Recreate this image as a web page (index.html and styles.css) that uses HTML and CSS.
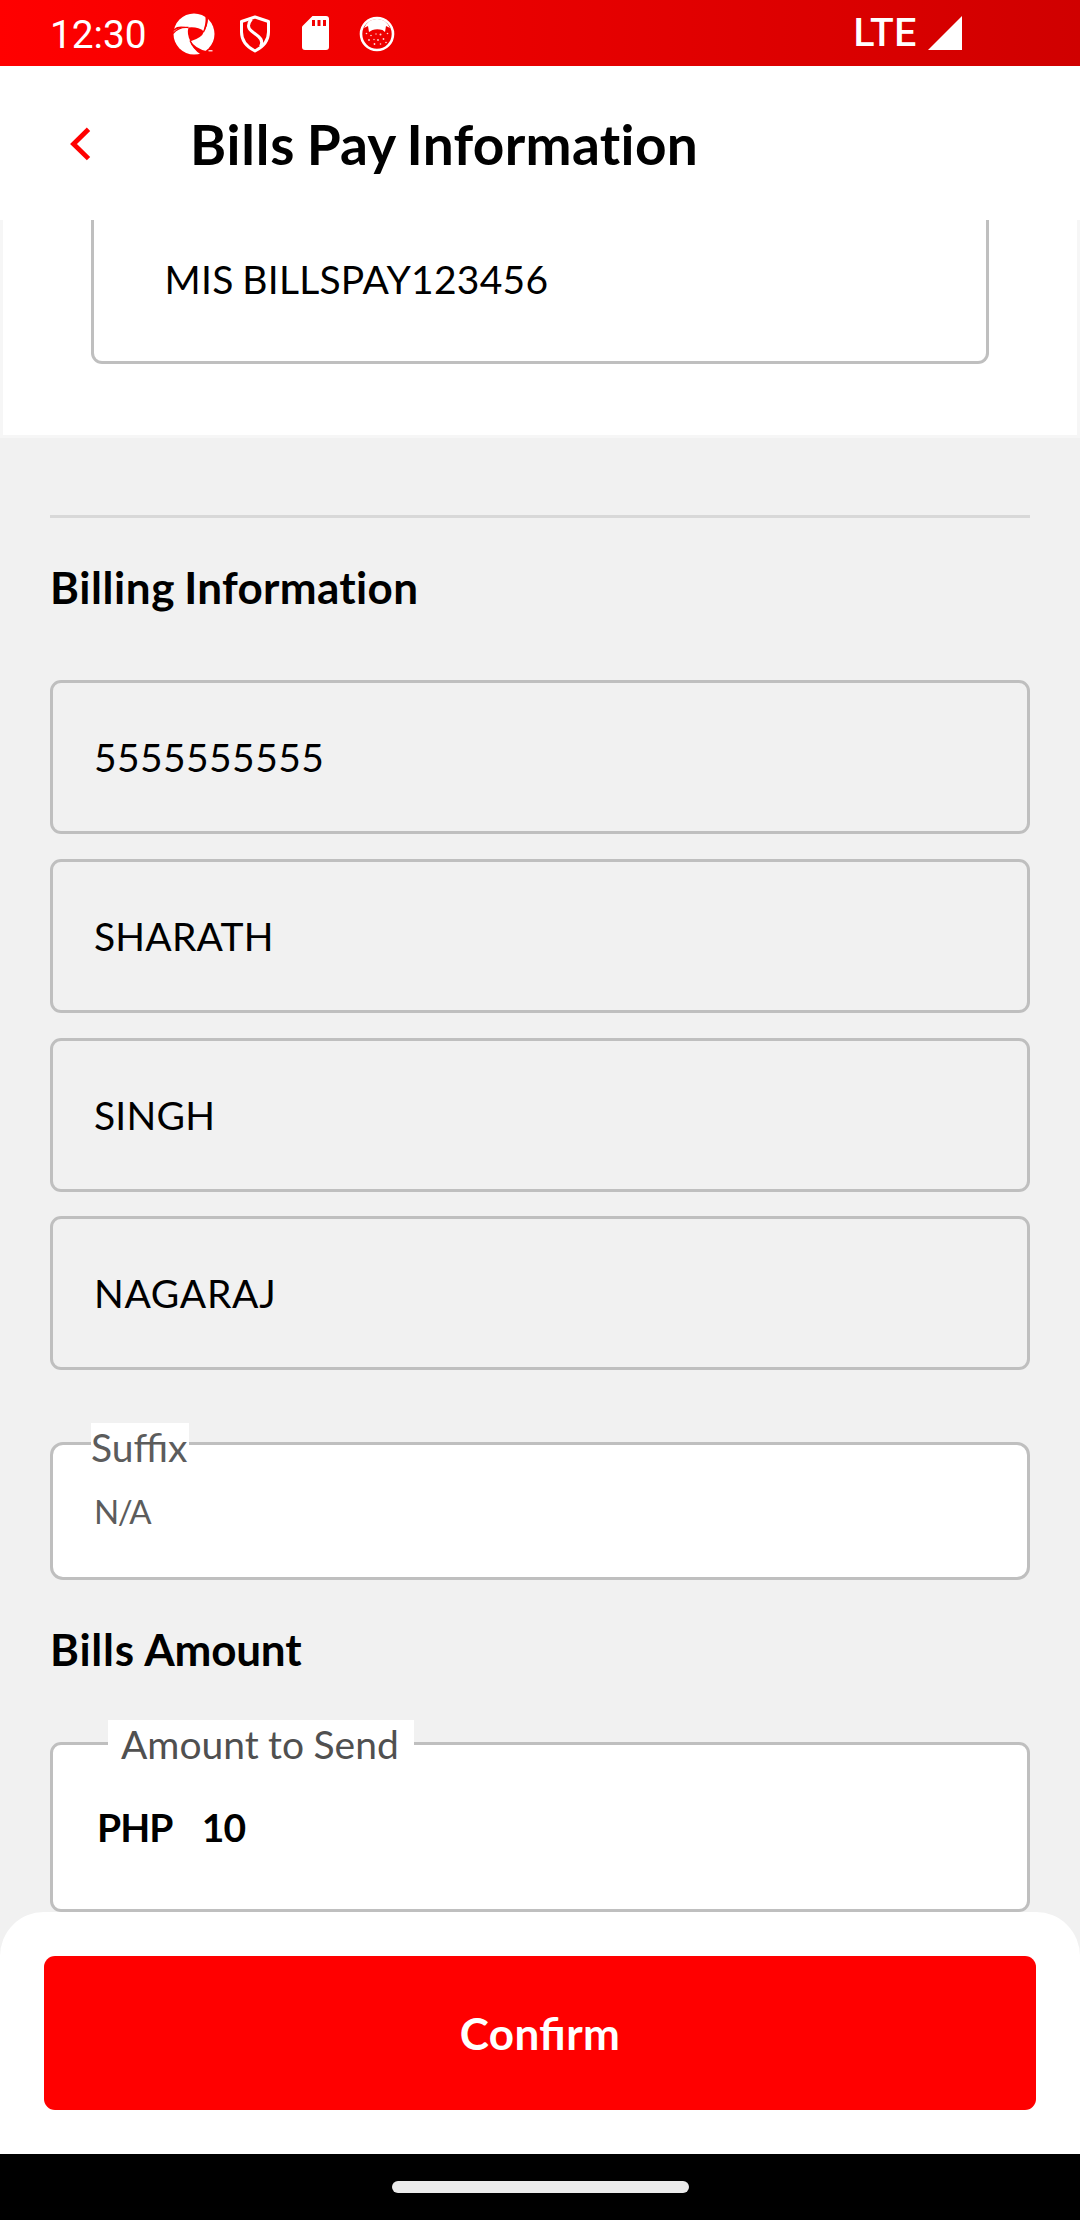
FILE: index.html
```html
<!DOCTYPE html>
<html lang="en">
<head>
<meta charset="utf-8">
<title>Bills Pay Information</title>
<link rel="stylesheet" href="styles.css">
</head>
<body>
<div class="screen">
  <div class="status">
    <span class="clock">12:30</span>
    <svg class="ic aperture" width="42" height="42" viewBox="0 0 42 42">
      <circle cx="21" cy="21" r="20.5" fill="#fff"/>
      <path d="M15.5 14.5 Q25 13.5 31 18.5 Q29 25 17.5 28.2 Q13.5 21 15.5 14.5Z" fill="#f80000"/>
      <path d="M33.500 0 Q33 10 30.500 18 Q35 13 35 6Z" fill="#f80000"/>
      <path d="M17 27 Q22 36 35 38.500 L28 41.500 Q19 36 17 27Z" fill="#f80000"/>
      <path d="M0 19 Q4 14 15 14.500 Q5 12 1 16Z" fill="#f80000"/>
      <g fill="none" stroke="#f80000" stroke-width="1.3">
        <path d="M0 20.5 Q6 13.5 15.5 14.5"/>
        <path d="M33 3.500 Q34.500 12 30.500 19"/>
        <path d="M17 27.500 Q20 36 30 40"/>
      </g>
      <path d="M35.500 37.800h4" stroke="#fff" stroke-width="1.200"/>
    </svg>
    <svg class="ic shield" width="32" height="38" viewBox="0 0 32 38">
      <g fill="none" stroke="#fff" stroke-width="3" stroke-linejoin="round">
        <path d="M16 2 L29.500 6.500 V17 C29.500 26.500 23 32.500 16 36 C9 32.500 2.500 26.500 2.500 17 V6.500 Z"/>
        <path d="M12.500 4 C8.500 9 8.500 13 12.500 16 L19.500 21.500 C23 24.500 23.500 28 21.500 31.500"/>
      </g>
    </svg>
    <svg class="ic card-ic" width="27" height="34" viewBox="0 0 27 34">
      <path d="M10.500 0 H24 Q27 0 27 3 V31 Q27 34 24 34 H3 Q0 34 0 31 V10.500 Z" fill="#fff"/>
      <path d="M10 4h3v6h-3zM15.500 4h3v6h-3zM21 4h3v6h-3z" fill="#f30000"/>
    </svg>
    <svg class="ic face" width="36" height="36" viewBox="0 0 36 36">
      <circle cx="18" cy="18" r="16" fill="none" stroke="#fff" stroke-width="2.600"/>
      <path d="M5 12 Q9 3 18 3 Q27 3 31 12 L27 10 L26 16 L23.500 14 Q18 12.500 13.500 14 L10 16 L9 10Z" fill="#fff"/>
      <g fill="#fff" opacity=".85">
        <circle cx="7.500" cy="17.500" r=".8"/><circle cx="12" cy="19.500" r=".8"/><circle cx="17" cy="18" r=".7"/><circle cx="21.500" cy="18.500" r="1"/><circle cx="28.500" cy="17.500" r=".8"/>
        <circle cx="10" cy="24" r=".9"/><circle cx="15" cy="23.500" r=".7"/><circle cx="19" cy="24" r=".9"/><circle cx="24.500" cy="23" r=".9"/><circle cx="15.500" cy="28" r=".9"/><circle cx="21.500" cy="28" r=".8"/><circle cx="27" cy="26.500" r=".8"/>
      </g>
    </svg>
    <span class="lte">LTE</span>
    <svg class="ic signal" width="34" height="34" viewBox="0 0 34 34"><path d="M34 0V34H0Z" fill="#fff"/></svg>
  </div>
  <header class="header">
    <svg class="back" width="21" height="34" viewBox="0 0 21 34"><path d="M18.500 2.200 L3.500 17 L18.500 31.600" fill="none" stroke="#f00" stroke-width="4.800"/></svg>
    <h1 class="title"><span class="wide">Bills</span> Pay <span class="slight">Information</span></h1>
  </header>
  <main class="content">
    <section class="biller"><div class="biller-name">MIS BILLSPAY123456</div></section>
    <section class="form">
      <hr class="rule">
      <h2 class="heading"><span class="medium">Billing</span> <span class="slight">Information</span></h2>
      <div class="fields">
        <div class="field digits">5555555555</div>
        <div class="field">SHARATH</div>
        <div class="field">SINGH</div>
        <div class="field loose">NAGARAJ</div>
      </div>
      <div class="box suffix"><span class="label suffix-label">Suffix</span><span class="suffix-value">N/A</span></div>
      <h2 class="heading amount-heading"><span class="wide">Bills</span> <span class="tight">Amount</span></h2>
      <div class="box amount"><span class="label amount-label">Amount to Send</span><span class="currency">PHP</span><span>10</span></div>
    </section>
  </main>
  <footer class="footer"><button class="confirm">Confirm</button></footer>
  <div class="nav"><div class="pill"></div></div>
</div>
</body>
</html>
```
FILE: styles.css
```css
* { box-sizing: border-box; }
body { margin: 0; font-family: Lato, "Liberation Sans", sans-serif; color: #000; background: #f1f1f1; }
.screen { width: 1080px; height: 2220px; display: flex; flex-direction: column; overflow: hidden; }
.status { height: 66px; flex: none; display: flex; align-items: flex-start; background: linear-gradient(90deg, #f00, #d00000); color: #fff; font-family: Roboto, sans-serif; }
.ic { display: block; flex: none; }
.clock { width: 122px; padding-left: 50px; margin-right: 51px; font-size: 38.8px; line-height: 69px; white-space: nowrap; }
.aperture { margin-top: 13px; }
.shield { margin: 14.5px 0 0 23.5px; }
.card-ic { margin: 16px 0 0 31.5px; }
.face { margin: 15.5px 0 0 29.5px; }
.lte { margin-left: auto; font-size: 39px; line-height: 66px; font-weight: 500; letter-spacing: .3px; }
.signal { margin: 16px 118px 0 11.5px; }
.header { height: 154px; flex: none; display: flex; align-items: center; background: #fff; padding-left: 70px; }
.back { margin-top: 1px; }
.title { margin: 1px 0 0 99px; font-size: 55px; line-height: 66px; font-weight: 700; font-variant-ligatures: none; word-spacing: -1.7px; }
.wide { letter-spacing: .8px; }
.medium { letter-spacing: .6px; }
.slight { letter-spacing: .32px; }
.tight { letter-spacing: -.2px; }
.content { height: 1692px; flex: none; }
.biller { height: 218px; background: #fff; border: solid #f6f6f6; border-width: 0 3px 3px; padding: 0 88px; }
.biller-name { height: 144px; border: 3px solid #bfbfbf; border-top: 0; border-radius: 0 0 11px 11px; padding: 35px 0 0 70.5px; font-size: 39px; line-height: 48px; letter-spacing: .25px; word-spacing: -1.5px; }
.form { padding: 77px 50px 0; }
.rule { height: 3px; margin: 0; border: 0; background: #d8d8d8; }
.heading { margin: 43px 0 0; font-size: 44px; line-height: 53px; font-weight: 700; font-variant-ligatures: none; word-spacing: -1.5px; }
.fields { display: flex; flex-direction: column; gap: 24.75px; margin-top: 66px; }
.field { height: 154px; border: 3px solid #bfbfbf; border-radius: 11px; padding-left: 41px; font-size: 39px; line-height: 148px; letter-spacing: .2px; }
.digits { letter-spacing: .4px; }
.loose { letter-spacing: .7px; }
.box { position: relative; display: flex; align-items: center; background: #fff; border: 3px solid #bfbfbf; border-radius: 13px; }
.label { position: absolute; height: 47px; padding-top: 1px; background: #fff; line-height: 47px; color: #5c5c5c; font-size: 39px; white-space: nowrap; }
.suffix { height: 138px; margin-top: 72px; padding-left: 41px; }
.suffix-label { left: 38px; top: -22px; width: 98px; }
.suffix-value { font-size: 33px; color: #5c5c5c; letter-spacing: -1.5px; }
.amount-heading { margin-top: 43px; }
.amount { height: 170px; margin-top: 66px; border-radius: 11px; padding-left: 44px; font-size: 39px; font-weight: 700; letter-spacing: -1px; }
.amount-label { left: 55px; top: -25px; width: 306px; padding-left: 13px; font-weight: 400; color: #505050; letter-spacing: 0; word-spacing: -.6px; }
.currency { margin-right: 29.5px; }
.footer { height: 242px; flex: none; padding: 44px; background: #fff; border-radius: 44px 44px 0 0; }
.confirm { display: block; width: 992px; height: 154px; border: 0; border-radius: 11px; background: #f00; color: #fff; font: 700 44px/53px Lato, "Liberation Sans", sans-serif; letter-spacing: .45px; font-feature-settings: "liga" 1; padding: 0; }
.nav { height: 66px; flex: none; display: flex; justify-content: center; padding-top: 27px; background: #000; }
.pill { width: 297px; height: 12px; border-radius: 6px; background: #ebebeb; }
```
